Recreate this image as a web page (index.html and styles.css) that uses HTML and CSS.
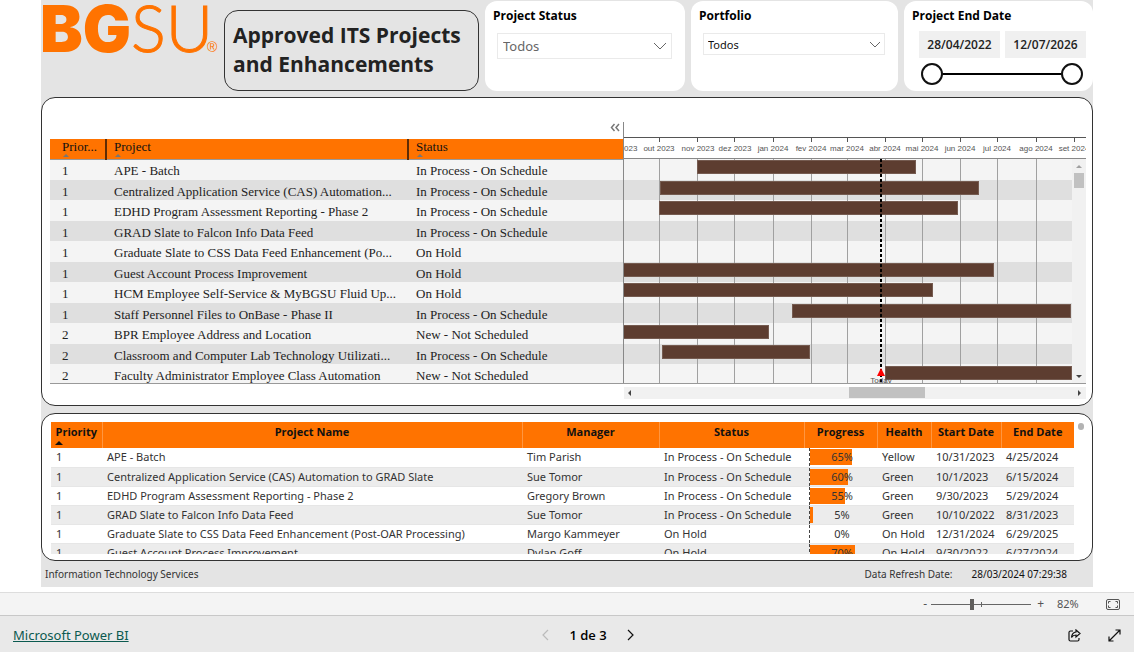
FILE: index.html
```html
<!DOCTYPE html>
<html lang="pt">
<head>
<meta charset="utf-8">
<title>Approved ITS Projects and Enhancements</title>
<link rel="stylesheet" href="styles.css">
</head>
<body>
<main class="report">
  <header class="top">
    <svg class="logo" width="177" height="60" viewBox="0 0 177 60" role="img" aria-label="BGSU">
      <text class="logo-heavy" x="-1" y="51">BG</text>
      <text class="logo-thin" x="90" y="51">SU</text>
      <text class="logo-mark" x="166" y="51">®</text>
    </svg>
    <h1 class="title">Approved ITS Projects and Enhancements</h1>
    <section class="slicer slicer-status">
      <label class="slicer-label" for="status">Project Status</label>
      <div class="picker picker-large">
        <select id="status"><option>Todos</option></select>
        <svg class="chevron" width="14" height="8" viewBox="0 0 14 8"><path d="M1 1l6 6 6-6"/></svg>
      </div>
    </section>
    <section class="slicer slicer-portfolio">
      <label class="slicer-label" for="portfolio">Portfolio</label>
      <div class="picker picker-small">
        <select id="portfolio"><option>Todos</option></select>
        <svg class="chevron" width="12" height="7" viewBox="0 0 12 7"><path d="M1 1l5 5 5-5"/></svg>
      </div>
    </section>
    <section class="slicer slicer-date">
      <span class="slicer-label">Project End Date</span>
      <div class="dates">
        <input type="text" value="28/04/2022" aria-label="Start date">
        <input type="text" value="12/07/2026" aria-label="End date">
      </div>
      <div class="range">
        <input type="range" min="0" max="100" value="0" aria-label="Range start">
        <input type="range" min="0" max="100" value="100" aria-label="Range end">
      </div>
    </section>
  </header>

  <section class="card gantt">
    <div class="gantt-body">
      <div class="gantt-list">
        <div class="gantt-tools"><button type="button" aria-label="Collapse"><svg width="10" height="9" viewBox="0 0 10 9"><path d="M4.500 1L1.500 4.500L4.500 8M9 1L6 4.500L9 8"/></svg></button></div>
        <table class="tasks">
          <colgroup><col class="t-prio"><col class="t-proj"><col class="t-stat"></colgroup>
          <thead><tr><th>Prior...</th><th>Project</th><th>Status</th></tr></thead>
          <tbody>
            <tr><td>1</td><td>APE - Batch</td><td>In Process - On Schedule</td></tr>
            <tr><td>1</td><td>Centralized Application Service (CAS) Automation...</td><td>In Process - On Schedule</td></tr>
            <tr><td>1</td><td>EDHD Program Assessment Reporting - Phase 2</td><td>In Process - On Schedule</td></tr>
            <tr><td>1</td><td>GRAD Slate to Falcon Info Data Feed</td><td>In Process - On Schedule</td></tr>
            <tr><td>1</td><td>Graduate Slate to CSS Data Feed Enhancement (Po...</td><td>On Hold</td></tr>
            <tr><td>1</td><td>Guest Account Process Improvement</td><td>On Hold</td></tr>
            <tr><td>1</td><td>HCM Employee Self-Service &amp; MyBGSU Fluid Up...</td><td>On Hold</td></tr>
            <tr><td>1</td><td>Staff Personnel Files to OnBase - Phase II</td><td>In Process - On Schedule</td></tr>
            <tr><td>2</td><td>BPR Employee Address and Location</td><td>New - Not Scheduled</td></tr>
            <tr><td>2</td><td>Classroom and Computer Lab Technology Utilizati...</td><td>In Process - On Schedule</td></tr>
            <tr><td>2</td><td>Faculty Administrator Employee Class Automation</td><td>New - Not Scheduled</td></tr>
          </tbody>
        </table>
      </div>
      <svg class="chart" width="463" height="262" viewBox="0 0 463 262" role="img" aria-label="Project timeline">
        <g class="band-light"><rect x="0" y="37" width="449" height="224"/></g>
        <g class="band-dark">
          <rect x="0" y="58" width="449" height="20"/><rect x="0" y="99" width="449" height="20"/>
          <rect x="0" y="140" width="449" height="20"/><rect x="0" y="181" width="449" height="20"/>
          <rect x="0" y="222" width="449" height="20"/>
        </g>
        <path class="gridlines" d="M36.500 37V261M74.500 37V261M111.500 37V261M150.500 37V261M188.500 37V261M224.500 37V261M262.500 37V261M299.500 37V261M337.500 37V261M374.500 37V261M413.500 37V261"/>
        <g class="bars">
          <rect x="74.500" y="38.500" width="218" height="13"/>
          <rect x="37.500" y="59.500" width="318" height="13"/>
          <rect x="36.500" y="79.500" width="298" height="13"/>
          <rect x="0.500" y="141.500" width="370" height="13"/>
          <rect x="0.500" y="161.500" width="309" height="13"/>
          <rect x="169.500" y="182.500" width="278" height="13"/>
          <rect x="0.500" y="203.500" width="145" height="13"/>
          <rect x="39.500" y="223.500" width="147" height="13"/>
          <rect x="262.500" y="244.500" width="186" height="13"/>
        </g>
        <path class="axis" d="M1 15.500H463M36.500 15V20M74.500 15V20M111.500 15V20M150.500 15V20M188.500 15V20M224.500 15V20M262.500 15V20M299.500 15V20M337.500 15V20M374.500 15V20M413.500 15V20M451.500 15V20"/>
        <g class="months">
          <text x="-1" y="29">set 2023</text><text x="36" y="29">out 2023</text><text x="75" y="29">nov 2023</text>
          <text x="112" y="29">dez 2023</text><text x="150" y="29">jan 2024</text><text x="188" y="29">fev 2024</text>
          <text x="224" y="29">mar 2024</text><text x="262" y="29">abr 2024</text><text x="299" y="29">mai 2024</text>
          <text x="337" y="29">jun 2024</text><text x="374" y="29">jul 2024</text><text x="413" y="29">ago 2024</text>
          <text x="451" y="29">set 2024</text>
        </g>
        <path class="today-line" d="M258 37V261"/>
        <path class="today-flag" d="M258 246l4 8h-8z"/>
        <text class="today-text" x="258" y="261">Today</text>
        <rect class="scroll-track" x="449" y="37" width="14" height="224"/>
        <rect class="scroll-thumb" x="451" y="51" width="10" height="15"/>
        <path class="arrow-off" d="M453 46l3-3 3 3z"/><path class="arrow-on" d="M453 253l3 3 3-3z"/>
        <path class="frame" d="M0 36.500H463"/>
        <path class="frame" d="M0.500 0V261"/>
      </svg>
    </div>
    <div class="hscroll">
      <svg width="462" height="12" viewBox="0 0 462 12" aria-hidden="true">
        <rect class="scroll-track" width="462" height="12"/>
        <rect class="scroll-thumb" x="225" y="0" width="76" height="11"/>
        <path class="arrow-on" d="M7 3v6l-3-3zM454 3v6l3-3z"/>
      </svg>
    </div>
  </section>

  <section class="card details">
    <div class="details-view">
      <table class="projects">
        <colgroup><col class="c-prio"><col class="c-name"><col class="c-man"><col class="c-stat"><col class="c-prog"><col class="c-health"><col class="c-start"><col class="c-end"></colgroup>
        <thead><tr><th class="sorted">Priority</th><th>Project Name</th><th>Manager</th><th>Status</th><th>Progress</th><th>Health</th><th>Start Date</th><th>End Date</th></tr></thead>
        <tbody>
          <tr><td>1</td><td>APE - Batch</td><td>Tim Parish</td><td>In Process - On Schedule</td><td class="meter"><div><i style="width:65%"></i><span>65%</span></div></td><td>Yellow</td><td>10/31/2023</td><td>4/25/2024</td></tr>
          <tr><td>1</td><td>Centralized Application Service (CAS) Automation to GRAD Slate</td><td>Sue Tomor</td><td>In Process - On Schedule</td><td class="meter"><div><i style="width:60%"></i><span>60%</span></div></td><td>Green</td><td>10/1/2023</td><td>6/15/2024</td></tr>
          <tr><td>1</td><td>EDHD Program Assessment Reporting - Phase 2</td><td>Gregory Brown</td><td>In Process - On Schedule</td><td class="meter"><div><i style="width:55%"></i><span>55%</span></div></td><td>Green</td><td>9/30/2023</td><td>5/29/2024</td></tr>
          <tr><td>1</td><td>GRAD Slate to Falcon Info Data Feed</td><td>Sue Tomor</td><td>In Process - On Schedule</td><td class="meter"><div><i style="width:5%"></i><span>5%</span></div></td><td>Green</td><td>10/10/2022</td><td>8/31/2023</td></tr>
          <tr><td>1</td><td>Graduate Slate to CSS Data Feed Enhancement (Post-OAR Processing)</td><td>Margo Kammeyer</td><td>On Hold</td><td class="meter"><div><i style="width:0%"></i><span>0%</span></div></td><td>On Hold</td><td>12/31/2024</td><td>6/29/2025</td></tr>
          <tr><td>1</td><td>Guest Account Process Improvement</td><td>Dylan Goff</td><td>On Hold</td><td class="meter"><div><i style="width:70%"></i><span>70%</span></div></td><td>On Hold</td><td>9/30/2022</td><td>6/27/2024</td></tr>
        </tbody>
      </table>
    </div>
    <div class="details-scroll"><i></i></div>
  </section>

  <footer class="credits">
    <span>Information Technology Services</span>
    <span class="refresh">Data Refresh Date:</span>
    <time>28/03/2024 07:29:38</time>
  </footer>
</main>

<div class="zoombar">
  <button type="button" aria-label="Zoom out">-</button>
  <div class="zoom"><input type="range" min="0" max="100" value="40" aria-label="Zoom"></div>
  <button type="button" aria-label="Zoom in">+</button>
  <span class="percent">82%</span>
  <button type="button" class="fit" aria-label="Fit to page"><svg width="14" height="11" viewBox="0 0 14 11"><rect x=".5" y=".5" width="13" height="10" rx="1.500"/><path d="M4.500 2.500h-2v2M9.500 2.500h2v2M4.500 8.500h-2v-2M9.500 8.500h2v-2"/></svg></button>
</div>
<footer class="appbar">
  <a href="#">Microsoft Power BI</a>
  <nav class="pager">
    <button type="button" class="off" aria-label="Previous page"><svg width="7" height="12" viewBox="0 0 7 12"><path d="M6 1L1 6l5 5"/></svg></button>
    <span>1 de 3</span>
    <button type="button" aria-label="Next page"><svg width="7" height="12" viewBox="0 0 7 12"><path d="M1 1l5 5-5 5"/></svg></button>
  </nav>
  <div class="actions">
    <button type="button" aria-label="Share"><svg width="13" height="13" viewBox="0 0 13 13"><path d="M5 2H2.500Q1 2 1 3.500v7Q1 12 2.500 12h7q1.500 0 1.500-1.500V9M8 1l4 3.500L8 8V6Q5 6 3.500 8.500Q4 3.500 8 3z"/></svg></button>
    <button type="button" aria-label="Full screen"><svg width="13" height="13" viewBox="0 0 13 13"><path d="M1 12L12 1M7.500 1H12v4.500M1 7.500V12h4.500"/></svg></button>
  </div>
</footer>
</body>
</html>
```
FILE: styles.css
```css
* { box-sizing: border-box; }
body {
  margin: 0;
  min-height: 100vh;
  display: flex;
  flex-direction: column;
  background: #fff;
  color: #333;
  font: 11px/16px "Noto Sans", "Open Sans", sans-serif;
}
button { border: 0; padding: 0; background: none; color: inherit; font: inherit; display: flex; align-items: center; }
svg { display: block; }
table { border-collapse: collapse; table-layout: fixed; width: 100%; }
th, td { padding: 0; white-space: nowrap; overflow: hidden; text-align: left; }

.report { margin: 0 41px; background: #e4e4e4; }

/* Header and slicers */
.top {
  display: grid;
  grid-template-columns: 177px minmax(0, 255fr) minmax(0, 200fr) minmax(0, 207fr) minmax(0, 189fr);
  gap: 6px;
  align-items: start;
  height: 97px;
  padding-top: 1px;
}
.logo { overflow: visible; }
.logo text { fill: #ff7300; }
.logo-heavy { font: 900 64px Inter, sans-serif; }
.logo-thin { font: 300 65px Lato, sans-serif; stroke: #ff7300; stroke-width: 1; }
.logo-mark { font: 14px "Liberation Sans", sans-serif; }
.title {
  height: 81px;
  margin: 9px 0 0;
  padding: 10px 8px;
  border: 1px solid #333;
  border-radius: 14px;
  color: #222;
  font: 700 21px/29px "Open Sans", sans-serif;
}
.slicer { height: 90px; padding: 6px 13px 0 8px; border-radius: 12px; background: #fff; }
.slicer-date { padding-right: 7px; }
.slicer-label { display: block; color: #000; font: 700 12px/18px "Open Sans", sans-serif; }
.picker { position: relative; margin: 8px 0 0 4px; }
.picker select {
  appearance: none;
  display: block;
  width: 100%;
  height: 26px;
  padding: 0 5px;
  border: 1px solid #eaeaea;
  border-radius: 0;
  background: #fff;
  color: #666;
  font: 13px "Noto Sans", sans-serif;
}
.picker-small select { height: 22px; padding: 0 4px; color: #111; font-size: 11px; }
.chevron { position: absolute; right: 5px; top: 9px; fill: none; stroke: #666; pointer-events: none; }
.picker-small .chevron { top: 8px; right: 4px; }
.dates { display: flex; gap: 5px; margin: 6px 0 0 7px; }
.dates input {
  flex: 1;
  min-width: 0;
  height: 27px;
  padding: 0;
  border: 0;
  background: #f0f0f0;
  color: #222;
  text-align: center;
  font: 600 12px "Open Sans", sans-serif;
}
.range { display: grid; align-items: center; height: 22px; margin: 5px 3px 0 9px; background: linear-gradient(#000, #000) center / 90% 2px no-repeat; }
.range input { grid-area: 1 / 1; appearance: none; width: 100%; height: 22px; margin: 0; background: none; pointer-events: none; }
.range input::-webkit-slider-thumb { appearance: none; width: 22px; height: 22px; border: 2px solid #111; border-radius: 50%; background: #fff; pointer-events: auto; }

/* Cards */
.card { border: 1px solid #333; border-radius: 14px; background: #fff; }

/* Gantt */
.gantt { height: 309px; padding: 24px 6px 0 8px; }
.gantt-body { display: grid; grid-template-columns: minmax(0, 573fr) minmax(0, 463fr); height: 262px; overflow: hidden; border-bottom: 1px solid #999; }
.gantt-tools { display: flex; justify-content: flex-end; height: 17px; padding: 0 3px 7px 0; }
.gantt-tools path { fill: none; stroke: #777; stroke-width: 1.5; }
.tasks { color: #222; font: 13px/16px "Liberation Serif", serif; }
.t-prio { width: 56px; }
.t-proj { width: 302px; }
.tasks th { position: relative; height: 20px; padding: 0 0 3px 8px; border-bottom: 1px solid #999; background: #ff7300; color: #111; font-weight: 400; }
.tasks th:first-child { padding-left: 12px; }
.tasks th + th { border-left: 2px solid #5e2c05; padding-left: 7px; }
.tasks th::after { content: ""; position: absolute; left: 8px; bottom: 2px; border: 3px solid transparent; border-top: 0; border-bottom-color: #777; }
.tasks th:first-child::after { left: 13px; }
.tasks td { height: 21px; padding: 3px 0 0 8px; background: #f4f4f4; line-height: 17px; vertical-align: top; }
.tasks tbody tr:first-child td { padding-top: 2px; }
.tasks tr:nth-child(even) td { height: 20px; background: #dfdfdf; }
.tasks td:first-child { padding-left: 12px; }
.chart { max-width: none; }
.band-light { fill: #f4f4f4; }
.band-dark { fill: #dfdfdf; }
.gridlines { fill: none; stroke: #a0a0a0; }
.bars { fill: #5d3d30; stroke: #755b50; }
.axis { fill: none; stroke: #555; }
.frame { fill: none; stroke: #888; }
.months, .today-text { fill: #555; font: 8px "Liberation Sans", sans-serif; text-anchor: middle; }
.today-line { stroke: #000; stroke-width: 2; stroke-dasharray: 3 2; }
.today-flag { fill: #f00; }
.scroll-track { fill: #f1f1f1; }
.scroll-thumb { fill: #c1c1c1; }
.arrow-off { fill: #a0a0a0; }
.arrow-on { fill: #444; }
.hscroll { display: flex; justify-content: flex-end; padding-top: 3px; }

/* Details table */
.details { display: flex; height: 148px; margin-top: 7px; padding: 8px 8px 6px 9px; }
.details-view { flex: 1; min-width: 0; overflow: hidden; }
.details-scroll { width: 10px; padding: 1px 0 0 4px; }
.details-scroll i { display: block; width: 6px; height: 7px; border-radius: 3px; background: #b3b3b3; }
.c-prio { width: 51px; }
.c-man { width: 137px; }
.c-stat { width: 145px; }
.c-prog { width: 73px; }
.c-health { width: 54px; }
.c-start { width: 70px; }
.c-end { width: 73px; }
.projects th { position: relative; height: 26px; padding: 2px 0 0; background: #ff7300; border-left: 1px solid #ff9640; color: #111; text-align: center; vertical-align: top; font-weight: 700; font-family: "Open Sans", sans-serif; }
.projects th.sorted { border-left: 0; }
.projects th.sorted::after { content: ""; position: absolute; left: 4px; bottom: 3px; border: 4px solid transparent; border-top: 0; border-bottom-color: #111; }
.projects td { height: 19px; padding: 0 0 0 5px; border-bottom: 1px solid #e6e6e6; }
.projects tr:nth-child(even) td { background: #ececec; }
.meter div { display: grid; align-items: center; height: 18px; margin-right: 3px; border-left: 1px dashed #444; }
.meter i { grid-area: 1 / 1; height: 16px; background: #ff7300; }
.meter span { grid-area: 1 / 1; text-align: center; }

.credits { display: flex; height: 26px; padding: 0 26px 0 4px; align-items: center; font-size: 10px; }
.refresh { margin-left: auto; }
.credits time { margin-left: 19px; color: #111; }

/* Viewer bars */
.zoombar { display: flex; align-items: center; justify-content: flex-end; height: 24px; margin-top: auto; padding: 0 14px 0 0; border-top: 1px solid #ddd; border-bottom: 1px solid #c8c8c8; background: #f4f4f4; color: #555; font-size: 12px; }
.zoom { position: relative; width: 100px; margin: 0 6px 0 4px; }
.zoom::after { content: ""; position: absolute; left: 50px; top: 5px; width: 1px; height: 5px; background: #666; }
.zoom input { appearance: none; display: block; width: 100%; height: 15px; margin: 0; background: linear-gradient(#666, #666) center / 100% 1px no-repeat; }
.zoom input::-webkit-slider-thumb { appearance: none; width: 4px; height: 11px; background: #605e5c; }
.percent { width: 24px; margin: 0 25px 0 13px; font-size: 11px; }
.fit svg { fill: none; stroke: #555; }
.appbar { display: grid; grid-template-columns: 1fr auto 1fr; align-items: center; height: 36px; padding: 2px 13px 0; background: #e9e9e9; color: #000; }
.appbar a { color: #0b5a50; font-size: 13px; }
.pager { display: flex; align-items: center; gap: 20px; padding-left: 42px; font: 600 13px/16px "Open Sans", sans-serif; }
.appbar svg { fill: none; stroke: #111; stroke-width: 1.2; }
.pager .off svg { stroke: #bbb; }
.actions { display: flex; justify-content: flex-end; gap: 27px; }
```
